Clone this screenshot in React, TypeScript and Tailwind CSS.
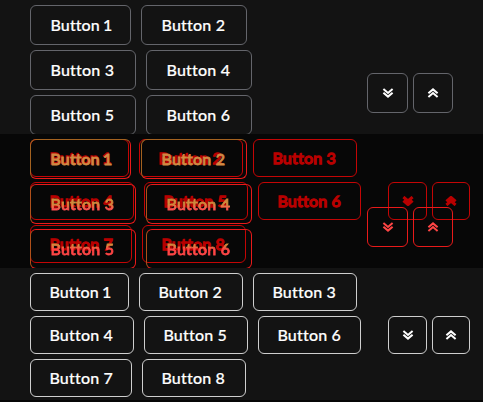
import React from 'react';

type Btn = { n: number; w: string };
type Look = { box: string; text: string; icon: string; rowText?: string[]; rowBox?: string[] };

const large: Btn[][] = [
  [{ n: 1, w: 'w-[101px]' }, { n: 2, w: 'w-[106px]' }],
  [{ n: 3, w: 'w-[106px]' }, { n: 4, w: 'w-[106px]' }],
  [{ n: 5, w: 'w-[106px]' }, { n: 6, w: 'w-[106px]' }],
];

const small: Btn[][] = [
  [{ n: 1, w: 'w-[99px]' }, { n: 2, w: 'w-[104px]' }, { n: 3, w: 'w-[104px]' }],
  [{ n: 4, w: 'w-[104px]' }, { n: 5, w: 'w-[104px]' }, { n: 6, w: 'w-[103px]' }],
  [{ n: 7, w: 'w-[102px]' }, { n: 8, w: 'w-[104px]' }],
];

function Chevrons({ up = false, heavy = false }: { up?: boolean; heavy?: boolean }) {
  return (
    <svg
      width="12"
      height="10"
      viewBox="0 0 12 10"
      fill="none"
      stroke="currentColor"
      strokeWidth={heavy ? 3 : 2}
      className={up ? 'rotate-180' : ''}
    >
      <path d="M1.4 1 L6 4.9 L10.6 1 M1.4 4.7 L6 8.6 L10.6 4.7" />
    </svg>
  );
}

function Panel({ size, look, heavy = false }: { size: 'large' | 'small'; look: Look; heavy?: boolean }) {
  const big = size === 'large';
  const rows = big ? large : small;
  const h = big ? 'h-10' : 'h-[38px]';
  return (
    <div className="flex h-[134px] w-[483px] items-start overflow-hidden pl-[30px] pt-[5px]">
      <div className={`flex shrink-0 flex-col gap-[5px] ${big ? 'w-[337px]' : 'w-[358px]'}`}>
        {rows.map((row, i) => (
          <div key={i} className="flex gap-2.5">
            {row.map((b) => (
              <div
                key={b.n}
                className={`flex shrink-0 items-center rounded-[6px] border ${big ? 'pl-[19.5px]' : 'pl-[18.4px]'} ${h} ${b.w} ${look.rowBox ? look.rowBox[i] : look.box}`}
              >
                <span
                  className={`whitespace-nowrap text-[16px] font-medium leading-5 ${b.n === 1 ? '[word-spacing:-1px] tracking-[0.1px]' : 'tracking-[0.2px]'} ${look.rowText ? look.rowText[i] : look.text}`}
                >
                  Button {b.n}
                </span>
              </div>
            ))}
          </div>
        ))}
      </div>
      <div className={`flex shrink-0 gap-[5px] ${look.icon} ${big ? 'mt-[68px]' : 'mt-[43px]'}`}>
        <div className={`flex items-center justify-center rounded-[6px] border ${h} ${big ? 'w-[41px]' : 'w-[39px]'} ${look.box}`}>
          <Chevrons heavy={heavy} />
        </div>
        <div className={`flex items-center justify-center rounded-[6px] border ${h} ${big ? 'w-10' : 'w-[38px]'} ${look.box}`}>
          <Chevrons up heavy={heavy} />
        </div>
      </div>
    </div>
  );
}

const whiteText = 'text-white [-webkit-text-stroke:0.2px_white]';
const before: Look = { box: 'border-[#64656b]', text: whiteText, icon: 'text-white' };
const after: Look = { box: 'border-[#cfcfcf]', text: whiteText, icon: 'text-white' };
const removed: Look = {
  box: 'border-[#c40505]',
  text: 'text-[#b90000] [-webkit-text-stroke:1.3px_#b90000]',
  icon: 'text-[#b90000]',
};
const blend = 'bg-clip-text text-transparent bg-linear-to-b [-webkit-text-stroke:0.8px_transparent]';
const added: Look = {
  box: 'border-[#e81a1a]',
  text: 'text-[#ff4545]',
  icon: 'text-[#ff4545]',
  rowBox: [
    'border-[#e81a1a] border-t-[#a46220] border-l-[#a46220]',
    'border-[#e81a1a] border-l-[#b0501a]',
    'border-[#e81a1a] border-l-[#b0501a]',
  ],
  rowText: [
    'text-[#d18a43] [-webkit-text-stroke:0.8px_#d18a43]',
    `${blend} from-[#d08a3c] from-50% to-[#ff5050] to-75%`,
    `${blend} from-[#d08a3c] from-30% to-[#ff4545] to-50%`,
  ],
};

export default function App() {
  return (
    <div className="h-[402px] w-[483px] overflow-hidden bg-[#070707] font-['Lato',sans-serif]">
      <div className="bg-[#131313]">
        <Panel size="large" look={before} />
      </div>
      <div className="relative bg-[#070707]">
        <Panel size="small" look={removed} heavy />
        <div className="absolute inset-0">
          <Panel size="large" look={added} />
        </div>
      </div>
      <div className="h-[132px] overflow-hidden bg-[#131313]">
        <Panel size="small" look={after} />
      </div>
    </div>
  );
}
